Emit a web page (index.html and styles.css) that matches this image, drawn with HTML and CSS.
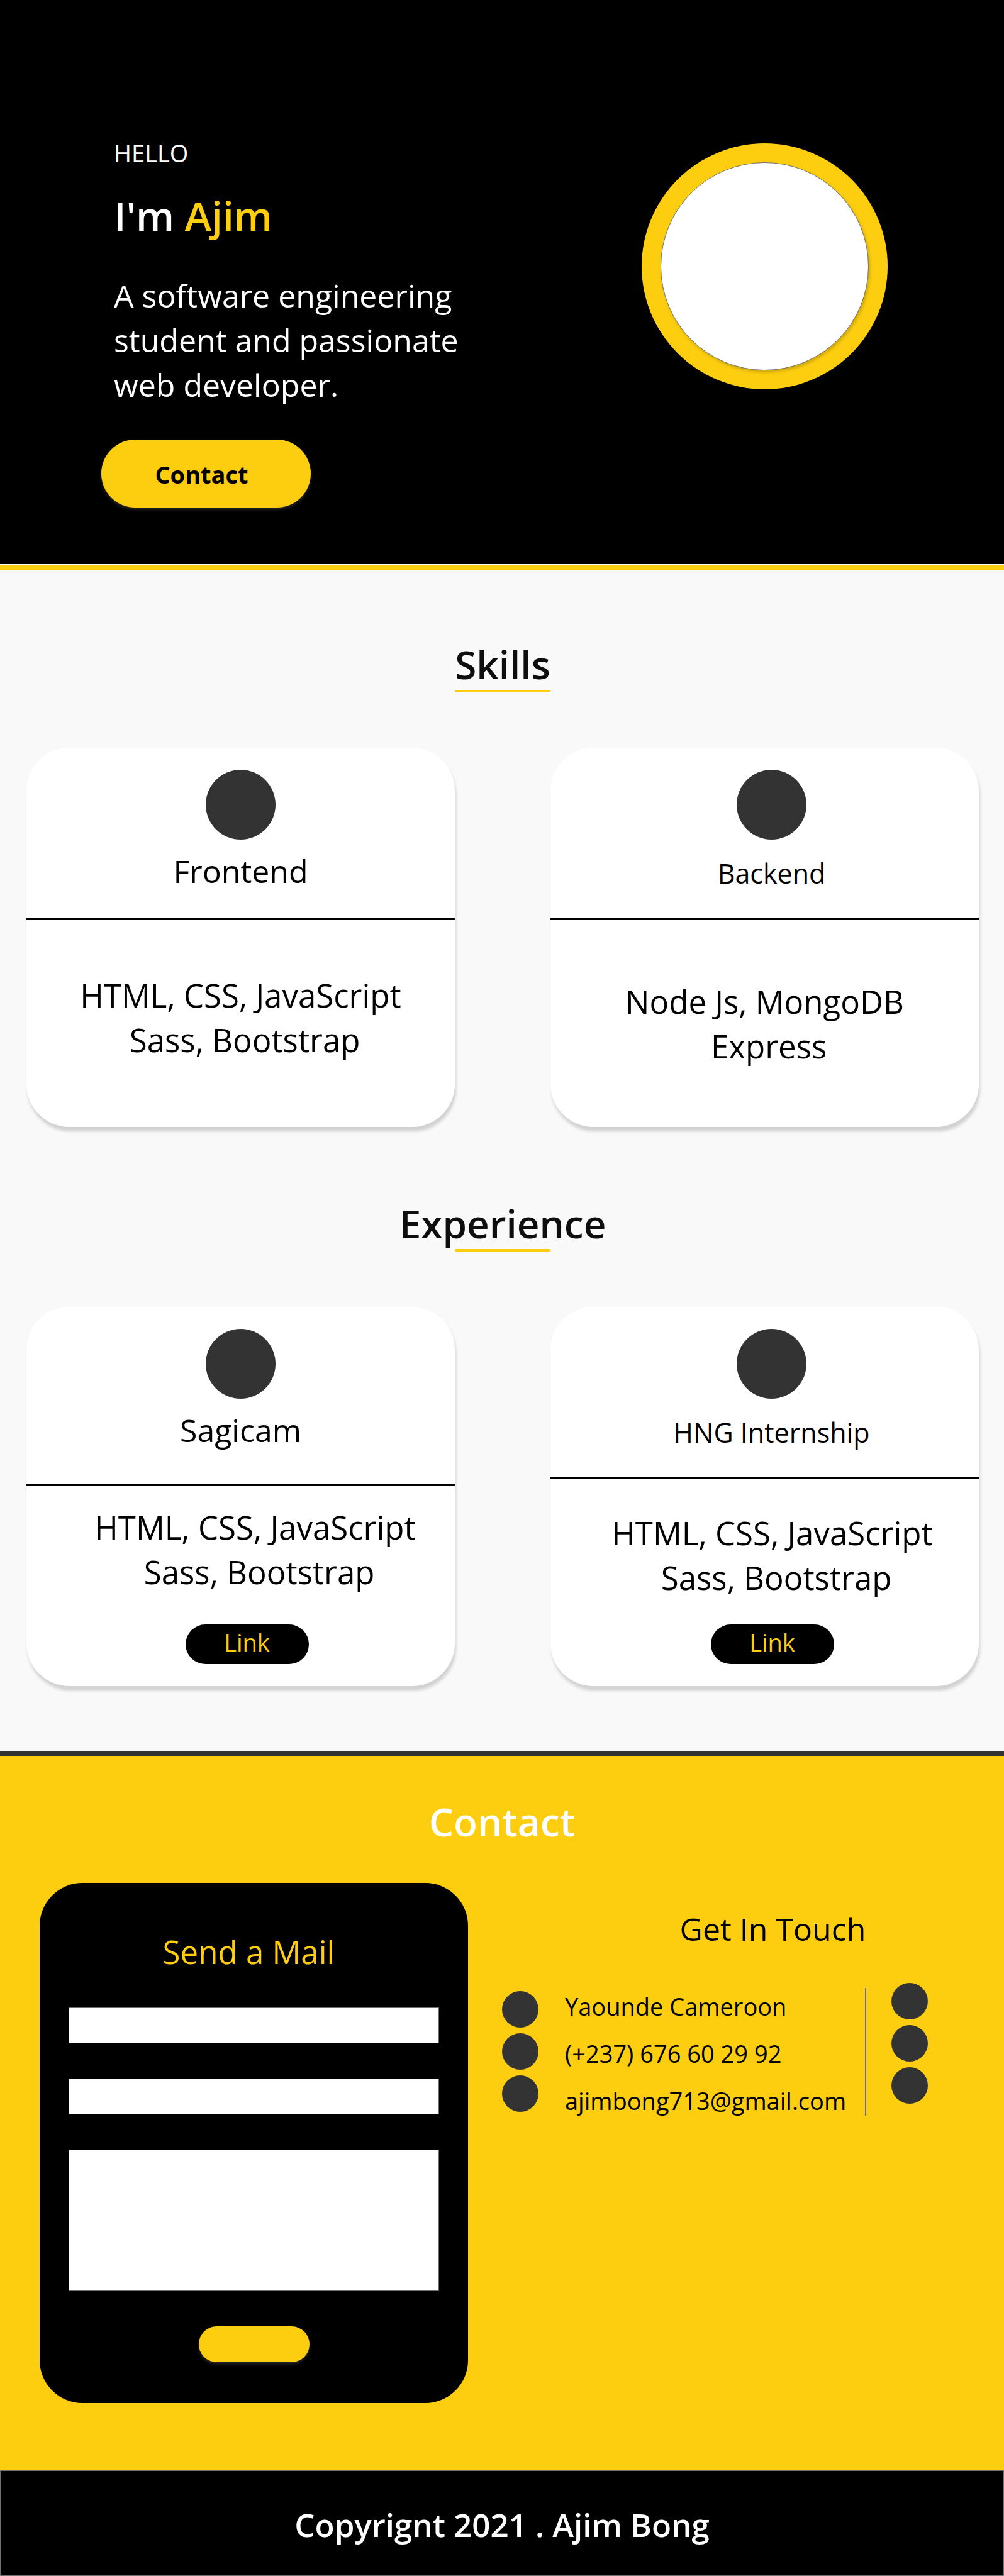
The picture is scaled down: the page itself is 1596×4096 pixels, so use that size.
FILE: index.html
```html
<!DOCTYPE html>
<html lang="en">
<head>
<meta charset="utf-8">
<meta name="viewport" content="width=device-width, initial-scale=1">
<title>Ajim Bong</title>
<link rel="stylesheet" href="styles.css">
</head>
<body>
<header class="hero">
  <div class="hero-copy">
    <p class="hello">HELLO</p>
    <h1 class="name">I'm <span class="accent">Ajim</span></h1>
    <p class="intro">A software engineering<br>student and passionate<br>web developer.</p>
    <a class="hero-button" href="#contact">Contact</a>
  </div>
  <div class="portrait"><div class="portrait-photo"></div></div>
</header>

<main>
  <section class="section">
    <h2 class="heading">Skills</h2>
    <div class="cards">
      <article class="card">
        <div class="card-head">
          <span class="dot"></span>
          <h3 class="card-title">Frontend</h3>
        </div>
        <div class="card-body">
          <p class="card-text">HTML, CSS, JavaScript<br>&nbsp;Sass, Bootstrap</p>
        </div>
      </article>
      <article class="card card-alt">
        <div class="card-head">
          <span class="dot"></span>
          <h3 class="card-title">Backend</h3>
        </div>
        <div class="card-body">
          <p class="card-text">Node Js, MongoDB<br>&nbsp;Express</p>
        </div>
      </article>
    </div>

    <h2 class="heading heading-next">Experience</h2>
    <div class="cards">
      <article class="card job">
        <div class="card-head">
          <span class="dot"></span>
          <h3 class="card-title">Sagicam</h3>
        </div>
        <div class="card-body">
          <p class="card-text">HTML, CSS, JavaScript<br>&nbsp;Sass, Bootstrap</p>
          <a class="card-link" href="#sagicam">Link</a>
        </div>
      </article>
      <article class="card card-alt job-alt">
        <div class="card-head">
          <span class="dot"></span>
          <h3 class="card-title">HNG Internship</h3>
        </div>
        <div class="card-body">
          <p class="card-text">HTML, CSS, JavaScript<br>&nbsp;Sass, Bootstrap</p>
          <a class="card-link" href="#hng">Link</a>
        </div>
      </article>
    </div>
  </section>

  <section class="contact" id="contact">
    <h2 class="contact-heading">Contact</h2>
    <div class="contact-grid">
      <form class="mail">
        <h3 class="mail-title">Send a Mail</h3>
        <input class="field" type="text" name="name" aria-label="Name">
        <input class="field" type="email" name="email" aria-label="Email">
        <textarea class="field field-message" name="message" aria-label="Message"></textarea>
        <button class="send" type="submit" aria-label="Send"></button>
      </form>
      <div class="touch">
        <h3 class="touch-title">Get In Touch</h3>
        <div class="touch-row">
          <div class="dots dots-info">
            <span class="small-dot"></span>
            <span class="small-dot"></span>
            <span class="small-dot"></span>
          </div>
          <address class="details">
            <span>Yaounde Cameroon</span>
            <span>(+237) 676 60 29 92</span>
            <span>ajimbong713@gmail.com</span>
          </address>
          <div class="dots dots-social">
            <a class="small-dot" href="#facebook" aria-label="Facebook"></a>
            <a class="small-dot" href="#twitter" aria-label="Twitter"></a>
            <a class="small-dot" href="#github" aria-label="GitHub"></a>
          </div>
        </div>
      </div>
    </div>
  </section>
</main>

<footer class="footer">Copyrignt 2021 . Ajim Bong</footer>
</body>
</html>
```
FILE: styles.css
```css
:root {
  --yellow: #fdce0f;
  --dark: #333;
  --text: 51px;
  --text-copy: 50px;
  --text-small: 38px;
  --title: 62px;
}

*, *::before, *::after { box-sizing: border-box; }

body {
  margin: 0;
  font-family: "Open Sans", "Noto Sans", sans-serif;
  font-size: var(--text);
  line-height: 71px;
  color: #000;
  background: #f9f9f9;
}

h1, h2, h3, p { margin: 0; font-weight: 400; font-size: inherit; }
a { color: inherit; text-decoration: none; }

/* Hero */
.hero {
  display: flex;
  justify-content: space-between;
  align-items: flex-start;
  padding: 216px 185px 91px 161px;
  color: #fff;
  background: #000;
  border-bottom: 9px solid var(--yellow);
  box-shadow: inset 0 -2px #fff;
}
.hello, .name, .intro { padding-left: 20px; }
.hello { font-size: var(--text-small); line-height: 54px; }
.name {
  margin-top: 29px;
  font-size: 64px;
  font-weight: 600;
  line-height: 88px;
}
.accent { color: var(--yellow); }
.intro { margin-top: 48px; font-size: var(--text-copy); }
.hero-button {
  display: flex;
  align-items: center;
  justify-content: center;
  width: 333px;
  height: 108px;
  margin-top: 51px;
  padding: 3px 14px 0 0;
  border-radius: 54px;
  font-size: var(--text-small);
  font-weight: 700;
  color: #000;
  background: var(--yellow);
  box-shadow: 0 3px 5px rgba(255, 255, 255, .16);
}
.portrait {
  width: 391px;
  margin-top: 12px;
  padding: 30px;
  border-radius: 50%;
  background: var(--yellow);
}
.portrait-photo {
  aspect-ratio: 1;
  border: 1px solid #707070;
  border-radius: 50%;
  background: #fff;
  box-shadow: 2px 3px 5px rgba(0, 0, 0, .2);
}

/* Skills and experience */
.section { padding: 108px 40px 103px 42px; }
.heading {
  display: flex;
  flex-direction: column;
  align-items: center;
  margin-bottom: 88px;
  font-size: var(--title);
  font-weight: 600;
  line-height: 82px;
  color: #0e0e0e;
}
.heading::after {
  content: "";
  width: 152px;
  height: 4px;
  background: var(--yellow);
}
.heading-next { margin-top: 112px; }
.cards {
  display: grid;
  grid-template-columns: 1fr 1fr;
  gap: 152px;
}
.card {
  border-radius: 68px;
  text-align: center;
  background: #fff;
  box-shadow: 2px 7px 5px rgba(0, 0, 0, .16);
}
.card-head {
  display: flex;
  flex-direction: column;
  align-items: center;
  gap: 15px;
  padding: 35px 0 39px;
  border-bottom: 3px solid #000;
}
.dot {
  width: 111px;
  height: 111px;
  border-radius: 50%;
  background: var(--dark);
}
.card-title { font-size: var(--text-copy); }
.card-body { padding: 84px 0 103px; }
.card-alt .card-head { padding: 35px 0 32px 22px; }
.card-alt .card-title { font-size: 43px; line-height: 78px; }
.card-alt .card-body { padding: 94px 0 93px; }

.job .card-head { padding-bottom: 50px; }
.job .card-body { padding: 30px 0 35px 20px; }
.job .card-text { padding-left: 26px; }
.job-alt .card-body { padding: 50px 0 35px 24px; }
.card-link {
  display: block;
  width: 196px;
  height: 63px;
  margin: 48px auto 0;
  border-radius: 32px;
  font-size: var(--text-small);
  line-height: 56px;
  color: var(--yellow);
  background: #000;
}
.job-alt .card-link { margin-top: 39px; }

/* Contact */
.contact {
  padding: 63px 121px 107px 63px;
  border-top: 8px solid var(--dark);
  background: var(--yellow);
}
.contact-heading {
  padding-left: 58px;
  font-size: var(--title);
  font-weight: 600;
  line-height: 82px;
  text-align: center;
  color: #fff;
}
.contact-grid {
  display: grid;
  grid-template-columns: 681fr 677fr;
  gap: 54px;
  align-items: start;
  margin-top: 57px;
}
.mail {
  display: flex;
  flex-direction: column;
  align-items: center;
  gap: 56px;
  padding: 74px 46px 65px;
  border-radius: 68px;
  background: #000;
}
.mail-title {
  margin-bottom: -3px;
  padding-right: 16px;
  color: var(--yellow);
}
.field {
  display: block;
  width: 100%;
  height: 57px;
  padding: 8px 16px;
  border: 1px solid #707070;
  border-radius: 0;
  font: inherit;
  font-size: 28px;
  line-height: 36px;
  background: #fff;
}
.field-message { height: 225px; resize: none; }
.send {
  width: 176px;
  height: 57px;
  border: 0;
  border-radius: 29px;
  background: var(--yellow);
  box-shadow: 0 3px 5px rgba(255, 255, 255, .16);
}
.touch { padding-top: 38px; }
.touch-title {
  padding-left: 184px;
  font-size: var(--text-copy);
  text-align: center;
}
.touch-row {
  display: flex;
  margin-top: 50px;
}
.dots {
  display: flex;
  flex-direction: column;
  gap: 9px;
}
.dots-info { padding-top: 13px; }
.small-dot {
  width: 58px;
  height: 58px;
  border-radius: 50%;
  background: var(--dark);
}
.details {
  display: flex;
  flex: 1;
  flex-direction: column;
  padding-left: 42px;
  font-size: var(--text-small);
  font-style: normal;
  line-height: 75px;
  white-space: nowrap;
}
.dots-social {
  position: relative;
  padding-left: 42px;
}
/* Divider between the address lines and the social links */
.dots-social::before {
  content: "";
  position: absolute;
  top: 8px;
  left: 0;
  width: 2px;
  height: 203px;
  background: #707070;
}

/* Footer */
.footer {
  padding: 50px 0 45px;
  border: 1px solid #707070;
  font-weight: 600;
  text-align: center;
  color: #fff;
  background: #000;
}
```
